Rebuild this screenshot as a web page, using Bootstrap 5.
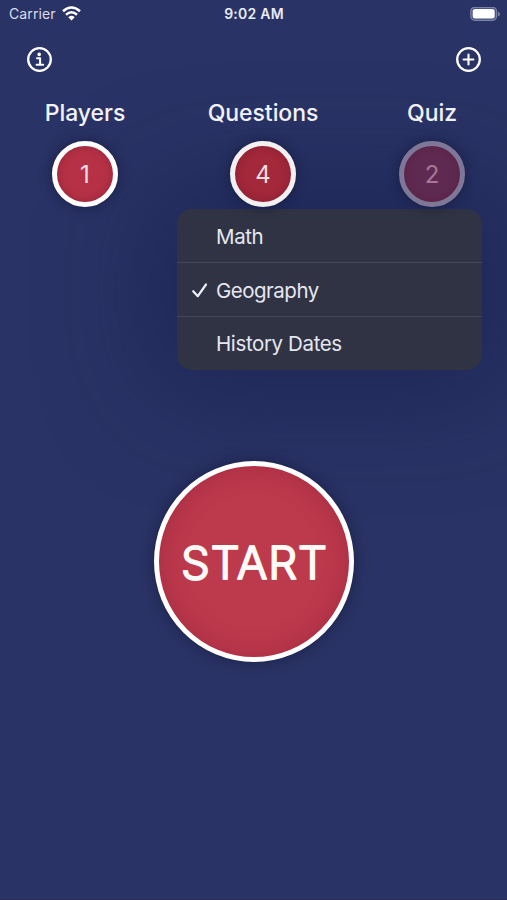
<!DOCTYPE html>
<html lang="en">
<head>
<meta charset="utf-8">
<meta name="viewport" content="width=device-width, initial-scale=1">
<title>Quiz</title>
<link href="https://cdn.jsdelivr.net/npm/bootstrap@5.3.0/dist/css/bootstrap.min.css" rel="stylesheet">
<style>
body{font-family:Inter,"Liberation Sans",sans-serif;background:#2a3365;color:#fff}
.screen{width:507px;height:900px;background:#2a3365;border-bottom:1px solid #2e2c58}
.status{height:28px;padding:0 7px 0 9px;font-size:13px;color:#d9dcee}
.status .side{flex:1 1 0}
.carrier{font-size:14px;letter-spacing:.1px;line-height:18px;margin-top:-1px}
.wifi{margin-left:6px;margin-top:-2px}
.clock{font-weight:600;font-size:14px;letter-spacing:.25px;color:#e9ebf7;margin:-2px 1px 0 0}
.toolbar-row{height:62px;padding:0 25.5px 0 26px}
.tool{width:27px;height:27px}
.settings{height:120px;padding:10px 42px 0 43px}
.setting-label{font-size:23px;line-height:27px;font-weight:500;white-space:nowrap;letter-spacing:-.05px;color:#f1f2fb}
.w-players{width:84px}.w-questions{width:113px}.w-quiz{width:66px}
.knob{width:66px;height:66px;margin-top:14px;padding:1px 0 0;border:5px solid #fff;color:#f4dfe4;font-size:24px;background:#b63145;box-shadow:0 0 12px rgba(10,14,40,.5),inset 0 0 9px rgba(80,10,35,.3)}
.knob.questions{background:#a2283a;border-color:#f3f0f2;color:#f0dce0}
.knob.quiz{background:#5f2a52;border-color:#7f7798;color:#a77796}
.options{width:305px;height:161px;margin:-1px 0 0 177px;border-radius:15px;background:#2f3343;box-shadow:0 0 105px 22px rgba(22,32,80,.68);--bs-list-group-bg:transparent}
.options .list-group-item{height:54px;padding:3px 0 0 14px;background:transparent;border:0;border-bottom:1px solid #444756;border-radius:0;color:#e6e7f1;font-size:20.5px;letter-spacing:-.38px}
.options .list-group-item:nth-child(2){letter-spacing:-.5px}
.options .list-group-item:last-child{border-bottom:0;height:53px;padding-top:2px}
.tick{width:18px;height:18px;margin:-2px 7px 0 0}
.start{width:200px;height:201px;margin:91px 0 0 154px;padding:0;border:5px solid #fff;background:#bd394c;box-shadow:0 0 14px rgba(12,18,48,.55),inset 0 0 24px rgba(120,20,45,.35)}
.start text{font-size:45.5px;font-weight:300;fill:#fffaf5;stroke:#fffaf5;stroke-width:2px;stroke-linejoin:round}
</style>
<script src="https://cdn.jsdelivr.net/npm/bootstrap@5.3.0/dist/js/bootstrap.bundle.min.js"></script>
</head>
<body>
<main class="screen d-flex flex-column overflow-hidden">
  <header class="status d-flex align-items-center">
    <div class="side d-flex align-items-center">
      <span class="carrier">Carrier</span>
      <svg class="wifi" width="19" height="15" viewBox="0 0 19 15" fill="none" stroke="#fff" stroke-width="2.5"><path d="M1 5.2Q9.5-2.2 18 5.2M4 8.7Q9.5 3.8 15 8.7"/><path d="M6.3 11.2Q9.5 8.4 12.7 11.2L9.5 14.4Z" fill="#fff" stroke="none"/></svg>
    </div>
    <div class="clock">9:02 AM</div>
    <div class="side d-flex justify-content-end">
      <svg width="30" height="15" viewBox="0 0 30 15"><rect x=".8" y=".3" width="25.8" height="13" rx="4" fill="#4c5481" stroke="#7d83a7" stroke-width="1.2"/><rect x="2.7" y="2" width="22" height="9.5" rx="2.5" fill="#fff"/><path d="M28 4.5v5q2-1 2-2.5T28 4.5" fill="#7d83a7"/></svg>
    </div>
  </header>
  <nav class="toolbar-row d-flex align-items-center justify-content-between">
    <svg class="tool" viewBox="0 0 27 27" fill="none" stroke="#fff" role="img" aria-label="Information"><circle cx="13.5" cy="13.5" r="11.3" stroke-width="2.3"/><circle cx="13.2" cy="8.4" r="1.8" fill="#fff" stroke="none"/><path d="M11 12.2h3.1v6.5M10.6 18.8h6.6" stroke-width="2" stroke-linecap="round" stroke-linejoin="round"/></svg>
    <svg class="tool" viewBox="0 0 27 27" fill="none" stroke="#fff" stroke-linecap="round" role="img" aria-label="Add"><circle cx="13.5" cy="13.5" r="11.3" stroke-width="2.3"/><path d="M13.5 8.6v9.8M8.6 13.5h9.8" stroke-width="2.1"/></svg>
  </nav>
  <section class="settings d-flex justify-content-between position-relative z-1">
    <div class="w-players d-flex flex-column align-items-center"><span class="setting-label">Players</span><button class="knob rounded-circle d-flex align-items-center justify-content-center">1</button></div>
    <div class="w-questions d-flex flex-column align-items-center"><span class="setting-label">Questions</span><button class="knob questions rounded-circle d-flex align-items-center justify-content-center">4</button></div>
    <div class="w-quiz d-flex flex-column align-items-center"><span class="setting-label">Quiz</span><button class="knob quiz rounded-circle d-flex align-items-center justify-content-center">2</button></div>
  </section>
  <div class="options list-group">
    <div class="list-group-item d-flex align-items-center"><span class="tick"></span>Math</div>
    <div class="list-group-item d-flex align-items-center"><svg class="tick" viewBox="0 0 18 18" fill="none" stroke="#f0f1f8" stroke-width="2.2" stroke-linecap="round" stroke-linejoin="round"><path d="M2.2 10.2 6.8 15.2 15 3.5"/></svg>Geography</div>
    <div class="list-group-item d-flex align-items-center"><span class="tick"></span>History Dates</div>
  </div>
  <button class="start rounded-circle d-flex align-items-center justify-content-center"><svg width="190" height="60" viewBox="0 0 190 60"><text x="95" y="46.5" text-anchor="middle" textLength="146" lengthAdjust="spacing">START</text></svg></button>
</main>
</body>
</html>
